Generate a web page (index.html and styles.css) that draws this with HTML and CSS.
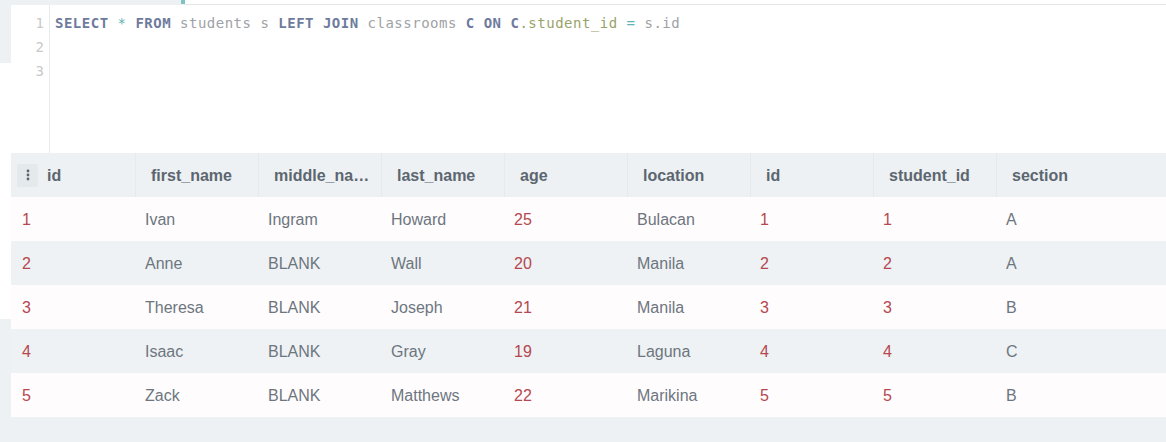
FILE: index.html
```html
<!DOCTYPE html>
<html>
<head>
<meta charset="utf-8">
<link rel="stylesheet" href="styles.css">
</head>
<body>
<div class="topbar">
  <div class="tab-gray"></div>
  <div class="tab-marker"></div>
  <div class="tab-rest"></div>
</div>
<div class="page">
  <div class="rail">
    <div class="rail-top"></div>
    <div class="rail-mid"></div>
    <div class="rail-bottom"></div>
  </div>
  <div class="main">
    <div class="editor">
      <div class="gutter">
        <div class="ln">1</div>
        <div class="ln">2</div>
        <div class="ln">3</div>
      </div>
      <div class="code">
        <div class="line"><span class="kw">SELECT</span> <span class="op">*</span> <span class="kw">FROM</span> <span class="id">students s</span> <span class="kw">LEFT JOIN</span> <span class="id">classrooms</span> <span class="kw">C</span> <span class="kw">ON</span> <span class="kw">C</span><span class="fld">.student_id</span> <span class="op">=</span> <span class="id">s.id</span></div>
        <div class="line"></div>
        <div class="line"></div>
      </div>
    </div>
    <div class="grid">
      <div class="row head">
        <div class="cell first"><span class="menu"><svg width="4" height="12" viewBox="0 0 4 12"><circle cx="2" cy="2" r="1.4"/><circle cx="2" cy="6" r="1.4"/><circle cx="2" cy="10" r="1.4"/></svg></span>id</div>
        <div class="cell">first_name</div>
        <div class="cell">middle_na…</div>
        <div class="cell">last_name</div>
        <div class="cell">age</div>
        <div class="cell">location</div>
        <div class="cell">id</div>
        <div class="cell">student_id</div>
        <div class="cell">section</div>
      </div>
      <div class="row odd">
        <div class="cell num first">1</div><div class="cell">Ivan</div><div class="cell">Ingram</div><div class="cell">Howard</div><div class="cell num">25</div><div class="cell">Bulacan</div><div class="cell num">1</div><div class="cell num">1</div><div class="cell">A</div>
      </div>
      <div class="row even">
        <div class="cell num first">2</div><div class="cell">Anne</div><div class="cell">BLANK</div><div class="cell">Wall</div><div class="cell num">20</div><div class="cell">Manila</div><div class="cell num">2</div><div class="cell num">2</div><div class="cell">A</div>
      </div>
      <div class="row odd">
        <div class="cell num first">3</div><div class="cell">Theresa</div><div class="cell">BLANK</div><div class="cell">Joseph</div><div class="cell num">21</div><div class="cell">Manila</div><div class="cell num">3</div><div class="cell num">3</div><div class="cell">B</div>
      </div>
      <div class="row even">
        <div class="cell num first">4</div><div class="cell">Isaac</div><div class="cell">BLANK</div><div class="cell">Gray</div><div class="cell num">19</div><div class="cell">Laguna</div><div class="cell num">4</div><div class="cell num">4</div><div class="cell">C</div>
      </div>
      <div class="row odd">
        <div class="cell num first">5</div><div class="cell">Zack</div><div class="cell">BLANK</div><div class="cell">Matthews</div><div class="cell num">22</div><div class="cell">Marikina</div><div class="cell num">5</div><div class="cell num">5</div><div class="cell">B</div>
      </div>
    </div>
  </div>
</div>
</body>
</html>
```

FILE: styles.css
```css
* { box-sizing: border-box; }
html, body {
  margin: 0;
  padding: 0;
  width: 1166px;
  height: 442px;
  overflow: hidden;
  background: #eef1f3;
  font-family: "Liberation Sans", Arial, sans-serif;
}
.topbar {
  display: flex;
  height: 5px;
}
.tab-gray { width: 181px; background: #eef1f3; }
.tab-marker { width: 4px; height: 4px; background: #7fc3c7; }
.tab-rest { flex: 1; background: #fff; border-bottom: 1px solid #e3e5e7; }
.page {
  display: flex;
  height: 437px;
}
.rail {
  width: 11px;
  display: flex;
  flex-direction: column;
}
.rail-top { height: 58px; background: #eef1f3; }
.rail-mid { height: 256px; background: #fff; }
.rail-bottom { flex: 1; background: #eef1f3; }
.main {
  flex: 1;
  display: flex;
  flex-direction: column;
}
.editor {
  height: 148px;
  background: #fff;
  display: flex;
}
.gutter {
  width: 39px;
  border-right: 1px solid #e8eaec;
  padding-top: 6px;
  padding-right: 5px;
  font-family: "DejaVu Sans Mono", monospace;
  font-size: 14px;
  color: #c9c9c9;
  text-align: right;
}
.ln { height: 24px; line-height: 24px; }
.code {
  padding-top: 6px;
  padding-left: 5px;
  font-family: "DejaVu Sans Mono", monospace;
  font-size: 14px;
  letter-spacing: 0.5px;
}
.line { height: 24px; line-height: 24px; white-space: pre; color: #9ea2a6; }
.kw { color: #6e7b9d; font-weight: bold; }
.op { color: #5fb3b3; }
.id { color: #9ea2a6; }
.fld { color: #98a36a; }
.grid {
  display: flex;
  flex-direction: column;
}
.row {
  display: grid;
  grid-template-columns: 124px repeat(7, 123px) 1fr;
  height: 44px;
}
.cell {
  display: flex;
  align-items: center;
  padding-left: 10px;
  padding-top: 2px;
  font-size: 16px;
  color: #6d767f;
  white-space: nowrap;
}
.head { background: #edf1f3; }
.head .cell {
  font-weight: bold;
  color: #5c6670;
  padding-left: 15px;
  border-left: 1px solid #e6eaed;
}
.head .cell.first { padding-left: 6px; border-left: none; }
.menu {
  width: 21px;
  height: 23px;
  margin-right: 9px;
  margin-top: -2px;
  background: #e4e9ec;
  border-radius: 2px;
  display: flex;
  align-items: center;
  justify-content: center;
}
.menu svg { fill: #5c6670; }
.odd { background: #fffcfd; }
.even { background: #eef2f4; }
.cell.num { color: #b5474f; }
.cell.num.first { padding-left: 11px; }
```
